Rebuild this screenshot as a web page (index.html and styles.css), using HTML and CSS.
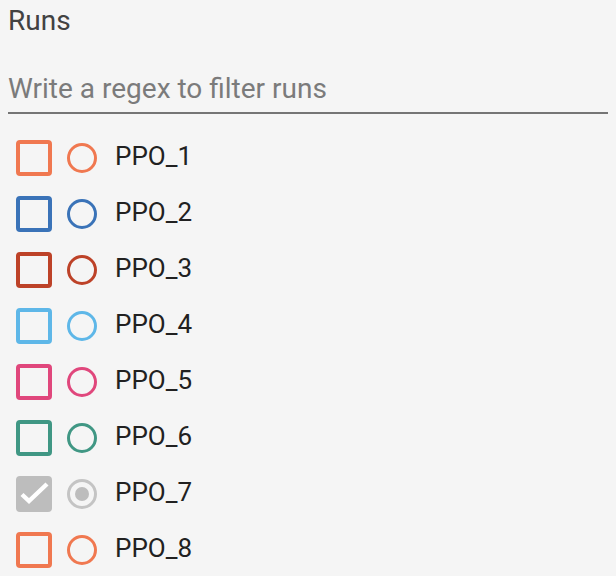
FILE: index.html
```html
<!DOCTYPE html>
<html>
<head>
<meta charset="utf-8">
<link rel="stylesheet" href="styles.css">
</head>
<body>
<div class="panel">
  <div class="title">Runs</div>
  <div class="filter">
    <input class="filter-input" type="text" placeholder="Write a regex to filter runs">
  </div>
  <ul class="runs">
    <li class="run c1"><span class="box"></span><span class="radio"></span><span class="label">PPO_1</span></li>
    <li class="run c2"><span class="box"></span><span class="radio"></span><span class="label">PPO_2</span></li>
    <li class="run c3"><span class="box"></span><span class="radio"></span><span class="label">PPO_3</span></li>
    <li class="run c4"><span class="box"></span><span class="radio"></span><span class="label">PPO_4</span></li>
    <li class="run c5"><span class="box"></span><span class="radio"></span><span class="label">PPO_5</span></li>
    <li class="run c6"><span class="box"></span><span class="radio"></span><span class="label">PPO_6</span></li>
    <li class="run c7 checked"><span class="box"><svg class="check" viewBox="0 0 36 36" width="36" height="36"><path d="M6 18.5 L13 25 L31 8" fill="none" stroke="#fff" stroke-width="4.4"/></svg></span><span class="radio selected"></span><span class="label">PPO_7</span></li>
    <li class="run c1"><span class="box"></span><span class="radio"></span><span class="label">PPO_8</span></li>
  </ul>
</div>
</body>
</html>
```
FILE: styles.css
```css
html, body {
  margin: 0;
  padding: 0;
  background: #f5f5f5;
}
body {
  font-family: Roboto, "Liberation Sans", sans-serif;
}
.panel {
  width: 616px;
  height: 576px;
  overflow: hidden;
}
.title {
  height: 42px;
  line-height: 42px;
  font-size: 28px;
  color: #424242;
  padding-left: 8px;
}
.filter {
  margin: 27px 8px 0 8px;
  border-bottom: 2px solid #757575;
  padding-bottom: 3px;
}
.filter-input {
  display: block;
  width: 100%;
  box-sizing: border-box;
  border: none;
  outline: none;
  background: transparent;
  padding: 0;
  margin: 0;
  height: 40px;
  line-height: 40px;
  font-family: Roboto, "Liberation Sans", sans-serif;
  font-size: 28px;
  color: #212121;
}
.filter-input::placeholder {
  color: #7b7b7b;
  opacity: 1;
}
.runs {
  list-style: none;
  margin: 16px 0 0 0;
  padding: 0;
}
.run {
  display: flex;
  align-items: center;
  height: 56px;
  padding-left: 16px;
}
.box {
  box-sizing: border-box;
  width: 36px;
  height: 36px;
  border: 4px solid var(--c);
  border-radius: 4px;
  flex: none;
  position: relative;
}
.radio {
  box-sizing: border-box;
  width: 30px;
  height: 30px;
  border: 3px solid var(--c);
  border-radius: 50%;
  margin-left: 15px;
  flex: none;
  display: flex;
  align-items: center;
  justify-content: center;
}
.label {
  margin-left: 18px;
  font-size: 26px;
  color: #212121;
  line-height: 56px;
  position: relative;
  top: -2px;
}
.c1 { --c: #f07850; }
.c2 { --c: #3a73b8; }
.c3 { --c: #bd4228; }
.c4 { --c: #5eb7e8; }
.c5 { --c: #e0477c; }
.c6 { --c: #409784; }
.c7 { --c: #c4c4c4; }
.checked .box {
  background: #bdbdbd;
  border-color: #bdbdbd;
}
.check {
  position: absolute;
  left: -4px;
  top: -4px;
}
.radio.selected::after {
  content: "";
  width: 14px;
  height: 14px;
  border-radius: 50%;
  background: #bdbdbd;
}
```
